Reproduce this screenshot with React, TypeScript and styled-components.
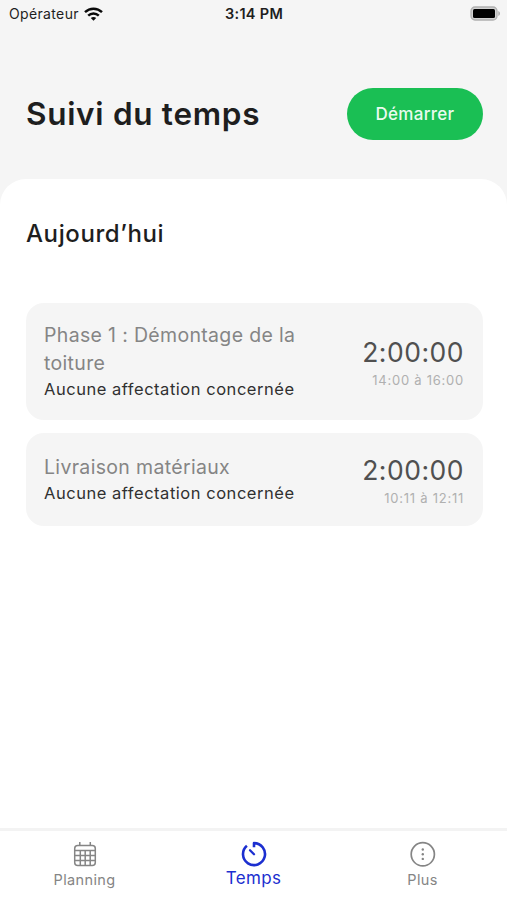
import React from "react";
import styled, { createGlobalStyle } from "styled-components";

const GlobalStyle = createGlobalStyle`
  * { box-sizing: border-box; }
  body { margin: 0; background: #f5f5f5; }
  h1, h2, p { margin: 0; }
`;

const Screen = styled.div`
  display: flex;
  flex-direction: column;
  width: 507px;
  height: 900px;
  overflow: hidden;
  background: #f5f5f5;
  color: #1e1e1e;
  font-family: Inter, "Liberation Sans", sans-serif;
`;

const StatusBar = styled.div`
  display: grid;
  grid-template-columns: 1fr auto 1fr;
  align-items: center;
  height: 28px;
  padding: 0 6px 2px 9px;
  font-size: 14px;
  line-height: 28px;
`;

const Carrier = styled.div`
  display: flex;
  align-items: center;
  gap: 5px;
  letter-spacing: 0.35px;

  svg { margin-bottom: 1px; }
`;

const Clock = styled.div`
  font-weight: 600;
  font-size: 14.5px;
  letter-spacing: 0.3px;
  margin-right: 2px;
`;

const BatterySlot = styled.div`
  display: flex;
  justify-content: flex-end;
  padding-bottom: 2px;
`;

const Header = styled.header`
  display: flex;
  align-items: center;
  justify-content: space-between;
  height: 151px;
  padding: 20px 24px 0 26px;
`;

const Title = styled.h1`
  font-size: 31.5px;
  font-weight: 600;
  line-height: 40px;
  letter-spacing: 0.7px;
`;

const StartButton = styled.button`
  width: 136px;
  height: 52px;
  padding: 0;
  border: 0;
  border-radius: 26px;
  background: #1abf54;
  color: #e9fbef;
  font-family: inherit;
  font-size: 17px;
  font-weight: 500;
  letter-spacing: 0.3px;
`;

const Sheet = styled.main`
  flex: 1;
  padding: 37px 24px 0 26px;
  border-radius: 26px 26px 0 0;
  background: #fff;
`;

const DayTitle = styled.h2`
  font-size: 24px;
  font-weight: 500;
  line-height: 36px;
  letter-spacing: 0.6px;
`;

const EntryList = styled.div`
  display: flex;
  flex-direction: column;
  gap: 13px;
  margin-top: 51px;
`;

const EntryCard = styled.article`
  display: flex;
  align-items: center;
  justify-content: space-between;
  min-height: 93px;
  padding: 18px 19px 18px 18px;
  border-radius: 18px;
  background: #f5f5f5;
`;

const EntryText = styled.div`
  width: 270px;
`;

const EntryName = styled.p`
  color: #858585;
  font-size: 19.5px;
  line-height: 28px;
  letter-spacing: 0.33px;
`;

const EntryNote = styled.p`
  color: #303030;
  font-size: 16.5px;
  line-height: 25px;
  letter-spacing: 0.53px;
`;

const EntryTime = styled.div`
  display: flex;
  flex-direction: column;
  align-items: flex-end;
`;

const Duration = styled.div`
  color: #505050;
  font-size: 26.5px;
  line-height: 36px;
  letter-spacing: 0.5px;
`;

const Range = styled.div`
  color: #b0b0b0;
  font-size: 13px;
  line-height: 20px;
  letter-spacing: 0.75px;
`;

const TabBar = styled.nav`
  display: grid;
  grid-template-columns: repeat(3, 1fr);
  height: 72px;
  border-top: 3px solid #f3f3f3;
  background: #fff;
`;

const Tab = styled.div<{ $active?: boolean }>`
  display: flex;
  flex-direction: column;
  align-items: center;
  gap: ${(p) => (p.$active ? "1px" : "2px")};
  padding-top: 10px;
  color: ${(p) => (p.$active ? "#1c2fd0" : "#858585")};
  font-size: ${(p) => (p.$active ? "17px" : "14.5px")};
  line-height: ${(p) => (p.$active ? "20px" : "22px")};
  letter-spacing: 0.35px;

  svg { display: block; }
`;

const WifiIcon = () => (
  <svg width="19" height="14" viewBox="0 0 19 14" fill="none" stroke="#0a0a0a" strokeWidth="2.4">
    <path d="M1 5.2C5.8.6 13.2.6 18 5.2" />
    <path d="M4.2 8.6c3-2.9 7.6-2.9 10.6 0" />
    <path d="M9.5 13.8 6.8 11c1.5-1.4 3.9-1.4 5.4 0Z" fill="#0a0a0a" stroke="none" />
  </svg>
);

const BatteryIcon = () => (
  <svg width="31" height="15" viewBox="0 0 31 15">
    <rect x="1" y="1" width="26" height="13" rx="4" fill="#d2d2d2" stroke="#b0b0b0" strokeWidth="1.3" />
    <rect x="3" y="3" width="22" height="9" rx="1.5" fill="#000" />
    <path d="M28.3 5v5c2.2-.9 2.2-4.1 0-5Z" fill="#aaa" />
  </svg>
);

const CalendarIcon = () => (
  <svg width="26" height="26" viewBox="0 0 26 26" fill="none" stroke="currentColor" strokeWidth="1.5">
    <rect x="2.7" y="4.4" width="20.6" height="20.2" rx="3" />
    <path d="M7.8 1v3.4M18.3 1v3.4M2.7 9.4h20.6M2.7 14.4h20.6M2.7 19.5h20.6M8.3 9.4v15.2M13.2 9.4v15.2M18.2 9.4v15.2" />
  </svg>
);

const TimerIcon = () => (
  <svg width="26" height="26" viewBox="0 0 26 26" fill="none" stroke="currentColor" strokeWidth="2.6">
    <path d="M13 6.2V2.1A11 11 0 1 1 5.9 4.7" strokeLinejoin="round" />
    <path d="m9 9.2 4 4" strokeLinecap="round" strokeWidth="2.3" />
  </svg>
);

const MoreIcon = () => (
  <svg width="26" height="26" viewBox="0 0 26 26">
    <circle cx="12.8" cy="13.3" r="11.6" fill="none" stroke="currentColor" strokeWidth="1.7" />
    <circle cx="12.8" cy="8.5" r="1.2" fill="currentColor" />
    <circle cx="12.8" cy="13.2" r="1.2" fill="currentColor" />
    <circle cx="12.8" cy="17.9" r="1.2" fill="currentColor" />
  </svg>
);

const entries = [
  { name: "Phase 1 : Démontage de la toiture", duration: "2:00:00", range: "14:00 à 16:00" },
  { name: "Livraison matériaux", duration: "2:00:00", range: "10:11 à 12:11" },
];

export default function App() {
  return (
    <>
      <GlobalStyle />
      <Screen>
        <StatusBar>
          <Carrier>
            <span>Opérateur</span>
            <WifiIcon />
          </Carrier>
          <Clock>3:14 PM</Clock>
          <BatterySlot>
            <BatteryIcon />
          </BatterySlot>
        </StatusBar>
        <Header>
          <Title>Suivi du temps</Title>
          <StartButton>Démarrer</StartButton>
        </Header>
        <Sheet>
          <DayTitle>Aujourd’hui</DayTitle>
          <EntryList>
            {entries.map((entry) => (
              <EntryCard key={entry.name}>
                <EntryText>
                  <EntryName>{entry.name}</EntryName>
                  <EntryNote>Aucune affectation concernée</EntryNote>
                </EntryText>
                <EntryTime>
                  <Duration>{entry.duration}</Duration>
                  <Range>{entry.range}</Range>
                </EntryTime>
              </EntryCard>
            ))}
          </EntryList>
        </Sheet>
        <TabBar>
          <Tab>
            <CalendarIcon />
            <span>Planning</span>
          </Tab>
          <Tab $active>
            <TimerIcon />
            <span>Temps</span>
          </Tab>
          <Tab>
            <MoreIcon />
            <span>Plus</span>
          </Tab>
        </TabBar>
      </Screen>
    </>
  );
}
